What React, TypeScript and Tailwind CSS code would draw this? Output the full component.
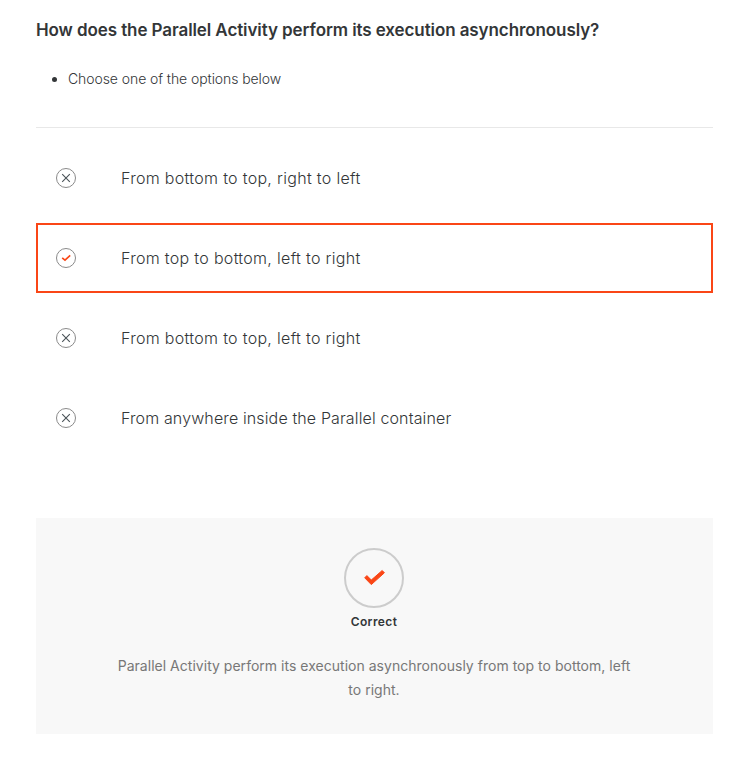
import React from "react";

const options = [
  { text: "From bottom to top, right to left", correct: false, tracking: "tracking-[0.31px]" },
  { text: "From top to bottom, left to right", correct: true, tracking: "tracking-[0.31px]" },
  { text: "From bottom to top, left to right", correct: false, tracking: "tracking-[0.31px]" },
  { text: "From anywhere inside the Parallel container", correct: false, tracking: "tracking-[0.13px]" },
];

function Mark({ correct }: { correct: boolean }) {
  return (
    <span className="flex size-5 items-center justify-center rounded-full border border-[#8a8a8a]">
      {correct ? (
        <svg width="10" height="10" viewBox="0 0 10 10" fill="none" stroke="#fa4616" strokeWidth="1.6">
          <path d="M1.2 4.8 4 7.2 9.2 2.4" />
        </svg>
      ) : (
        <svg width="10" height="10" viewBox="0 0 10 10" fill="none" stroke="#4a5358" strokeWidth="1.1">
          <path d="M1.2 1.2 8.8 8.8M8.8 1.2 1.2 8.8" />
        </svg>
      )}
    </span>
  );
}

export default function App() {
  return (
    <main className="h-[763px] w-[748px] bg-white pl-9 pr-[35px] pt-[18px] font-['Inter',sans-serif] text-[#333638]">
      <h1 className="text-[17px] leading-6 font-semibold tracking-[-0.09px]">
        How does the Parallel Activity perform its execution asynchronously?
      </h1>
      <ul className="mt-[25px] list-disc pl-8 text-sm leading-6 font-light tracking-[-0.08px]">
        <li>Choose one of the options below</li>
      </ul>
      <hr className="mt-9 border-[#e8e8e8]" />
      <div className="mt-[15px] flex flex-col gap-2.5">
        {options.map((o) => (
          <div
            key={o.text}
            className={`flex h-[70px] items-center border-2 pl-[18px] ${o.correct ? "border-[#fa4616]" : "border-transparent"}`}
          >
            <Mark correct={o.correct} />
            <span className={`ml-[45px] text-base font-light ${o.tracking}`}>{o.text}</span>
          </div>
        ))}
      </div>
      <section className="mt-[65px] flex h-[216px] flex-col items-center bg-[#f8f8f8] pt-[30px] pr-px">
        <div className="flex size-[60px] items-center justify-center rounded-full border-2 border-[#ccc]">
          <svg width="24" height="18" viewBox="0 0 24 18" fill="#fa4616" stroke="#fa4616" strokeWidth="1" strokeLinejoin="round">
            <path d="M2.7 8.8 4.9 6.6 9.3 11 20.2 1.5 22.4 3.8 9.3 15.6Z" />
          </svg>
        </div>
        <p className="mt-1 text-xs leading-5 font-semibold tracking-[0.4px]">Correct</p>
        <p className="mt-[22px] w-[520px] text-center text-sm leading-6 tracking-[0.02px] text-[#777]">
          Parallel Activity perform its execution asynchronously from top to bottom, left to right.
        </p>
      </section>
    </main>
  );
}
